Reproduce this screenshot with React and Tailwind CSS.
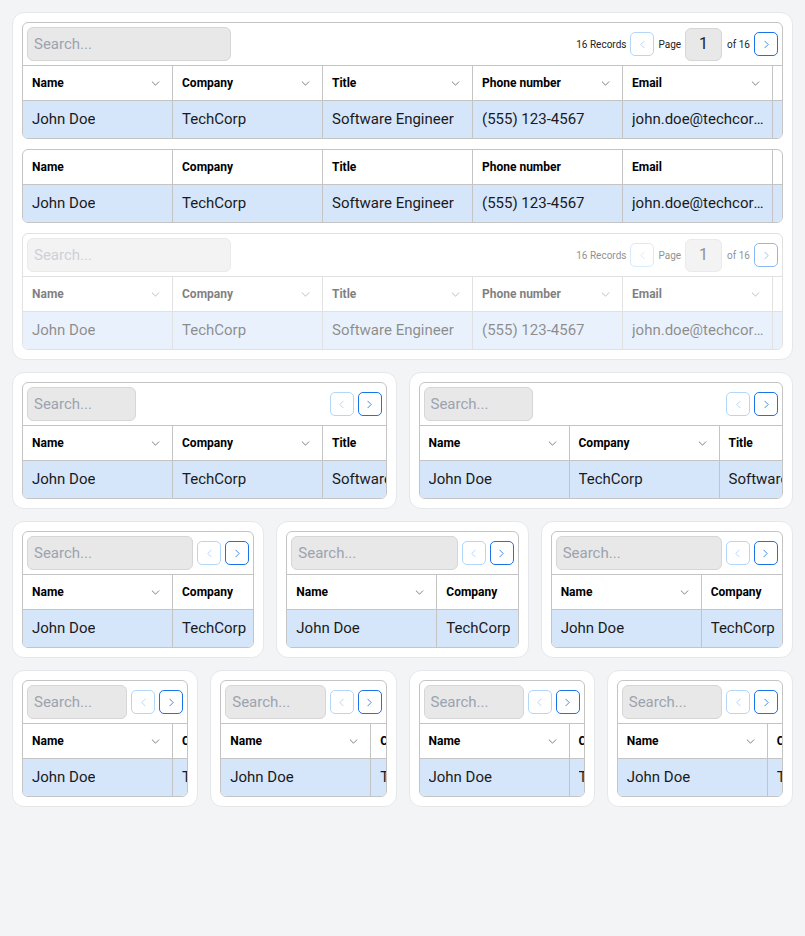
import React from 'react';

const COLUMNS = [
  { label: 'Name', value: 'John Doe' },
  { label: 'Company', value: 'TechCorp' },
  { label: 'Title', value: 'Software Engineer' },
  { label: 'Phone number', value: '(555) 123-4567' },
  { label: 'Email', value: 'john.doe@techcorp.com' },
  { label: 'Address', value: '123 Main Street' },
];

const Chevron = ({ dir = 'down', className = '' }) => {
  const d = dir === 'down' ? 'M1 1l4 4 4-4' : dir === 'left' ? 'M5 1L1 5l4 4' : 'M1 1l4 4-4 4';
  const box = dir === 'down' ? '0 0 10 6' : '0 0 6 10';
  return (
    <svg viewBox={box} className={className} fill="none" stroke="currentColor" strokeWidth="1" strokeLinecap="round" strokeLinejoin="round">
      <path d={d} />
    </svg>
  );
};

const PageButton = ({ dir, active }) => (
  <button
    className={`w-[24px] h-[24px] shrink-0 rounded-[5px] border flex items-center justify-center bg-white ${
      active ? 'border-[#1a73e8] text-[#1a73e8]' : 'border-[#b3d7fb] text-[#a9cff8]'
    }`}
  >
    <Chevron dir={dir} className="w-[5px] h-[9px]" />
  </button>
);

const Search = ({ width, grow }) => (
  <div
    className={`h-[34px] rounded-[6px] border border-[#d6d6d6] bg-[#e8e8e8] flex items-center pl-[6px] text-[15px] text-[#9ca3af] ${
      grow ? 'flex-1 min-w-0' : 'shrink-0'
    }`}
    style={width ? { width } : undefined}
  >
    Search...
  </div>
);

const Toolbar = ({ full, searchWidth, grow }) => (
  <div className="flex items-center gap-[4px] p-[4px] border-b border-[#c4c4c4]">
    <Search width={searchWidth} grow={grow} />
    {!grow && <div className="flex-1" />}
    {full && <span className="text-[10px] text-[#222] ml-[2px]">16 Records</span>}
    <PageButton dir="left" />
    {full && (
      <>
        <span className="text-[10px] text-[#222]">Page</span>
        <div className="w-[37px] h-[33px] rounded-[6px] border border-[#d6d6d6] bg-[#e8e8e8] flex items-center justify-center text-[16px] text-[#222]">
          1
        </div>
        <span className="text-[10px] text-[#222] ml-[1px]">of 16</span>
      </>
    )}
    <PageButton dir="right" active />
  </div>
);

const Table = ({ toolbar, searchWidth, grow, sortable = true, disabled }) => (
  <div className={`border border-[#c4c4c4] rounded-[6px] overflow-hidden bg-white ${disabled ? 'opacity-50' : ''}`}>
    {toolbar && <Toolbar full={toolbar === 'full'} searchWidth={searchWidth} grow={grow} />}
    <div className="flex h-[35px] border-b border-[#c4c4c4]">
      {COLUMNS.map((c) => (
        <div key={c.label} className="w-[150px] shrink-0 border-r border-[#c4c4c4] flex items-center justify-between pl-[9px] pr-[12px]">
          <span className="text-[12px] font-bold text-black whitespace-nowrap">{c.label}</span>
          {sortable && <Chevron dir="down" className="w-[9px] h-[5px] text-[#666]" />}
        </div>
      ))}
    </div>
    <div className="flex h-[37px] bg-[#d5e6fb]">
      {COLUMNS.map((c) => (
        <div key={c.label} className="w-[150px] shrink-0 border-r border-[#c4c4c4] flex items-center pl-[9px] pr-[4px] overflow-hidden">
          <span className="text-[15px] text-[#1a1a1a] whitespace-nowrap overflow-hidden text-ellipsis">{c.value}</span>
        </div>
      ))}
    </div>
  </div>
);

const Card = ({ children, className = '' }) => (
  <div className={`bg-white border border-[#e5e7eb] rounded-[12px] p-[9px] min-w-0 flex flex-col gap-[10px] ${className}`}>
    {children}
  </div>
);

export default function App() {
  return (
    <div className="min-h-screen bg-[#f3f4f6] p-[12px] flex flex-col gap-[12px]" style={{ fontFamily: 'Roboto, "Noto Sans", sans-serif' }}>
      <Card>
        <Table toolbar="full" searchWidth={204} />
        <Table sortable={false} />
        <Table toolbar="full" searchWidth={204} disabled />
      </Card>
      <div className="grid grid-cols-2 gap-[12px]">
        <Card><Table toolbar="compact" searchWidth={109} /></Card>
        <Card><Table toolbar="compact" searchWidth={109} /></Card>
      </div>
      <div className="grid grid-cols-3 gap-[12px]">
        <Card><Table toolbar="compact" grow /></Card>
        <Card><Table toolbar="compact" grow /></Card>
        <Card><Table toolbar="compact" grow /></Card>
      </div>
      <div className="grid grid-cols-4 gap-[12px]">
        <Card><Table toolbar="compact" grow /></Card>
        <Card><Table toolbar="compact" grow /></Card>
        <Card><Table toolbar="compact" grow /></Card>
        <Card><Table toolbar="compact" grow /></Card>
      </div>
    </div>
  );
}
